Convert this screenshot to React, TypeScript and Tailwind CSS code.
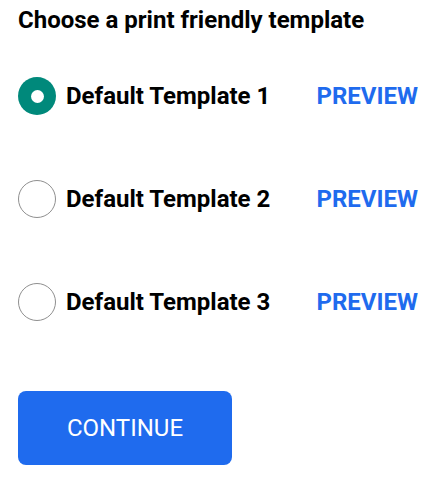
import { useState } from "react";

const templates = ["Default Template 1", "Default Template 2", "Default Template 3"];

export default function App() {
  const [selected, setSelected] = useState(0);

  return (
    <div
      className="w-[431px] h-[477px] bg-white px-[18px] pt-[6px]"
      style={{ fontFamily: "Roboto, 'Liberation Sans', sans-serif" }}
    >
      <h1 className="text-[24px] leading-[28px] font-bold text-black">Choose a print friendly template</h1>

      <div className="mt-[43px] flex w-[400px] flex-col gap-[65px]">
        {templates.map((name, i) => (
          <div key={name} className="flex h-[38px] items-center justify-between">
            <label className="flex cursor-pointer items-center gap-[10px]" onClick={() => setSelected(i)}>
              {selected === i ? (
                <span className="flex h-[38px] w-[38px] items-center justify-center rounded-full bg-[#00897b]">
                  <span className="h-[13px] w-[13px] rounded-full bg-white" />
                </span>
              ) : (
                <span className="h-[38px] w-[38px] rounded-full border border-[#8f8f8f] bg-white" />
              )}
              <span className="text-[24px] font-bold leading-none text-black">{name}</span>
            </label>
            <button className="text-[24px] font-bold leading-none text-[#1f6bee]">PREVIEW</button>
          </div>
        ))}
      </div>

      <button className="mt-[70px] flex h-[74px] w-[214px] items-center justify-center rounded-[8px] bg-[#1f6bee] text-[24px] text-white">
        CONTINUE
      </button>
    </div>
  );
}
